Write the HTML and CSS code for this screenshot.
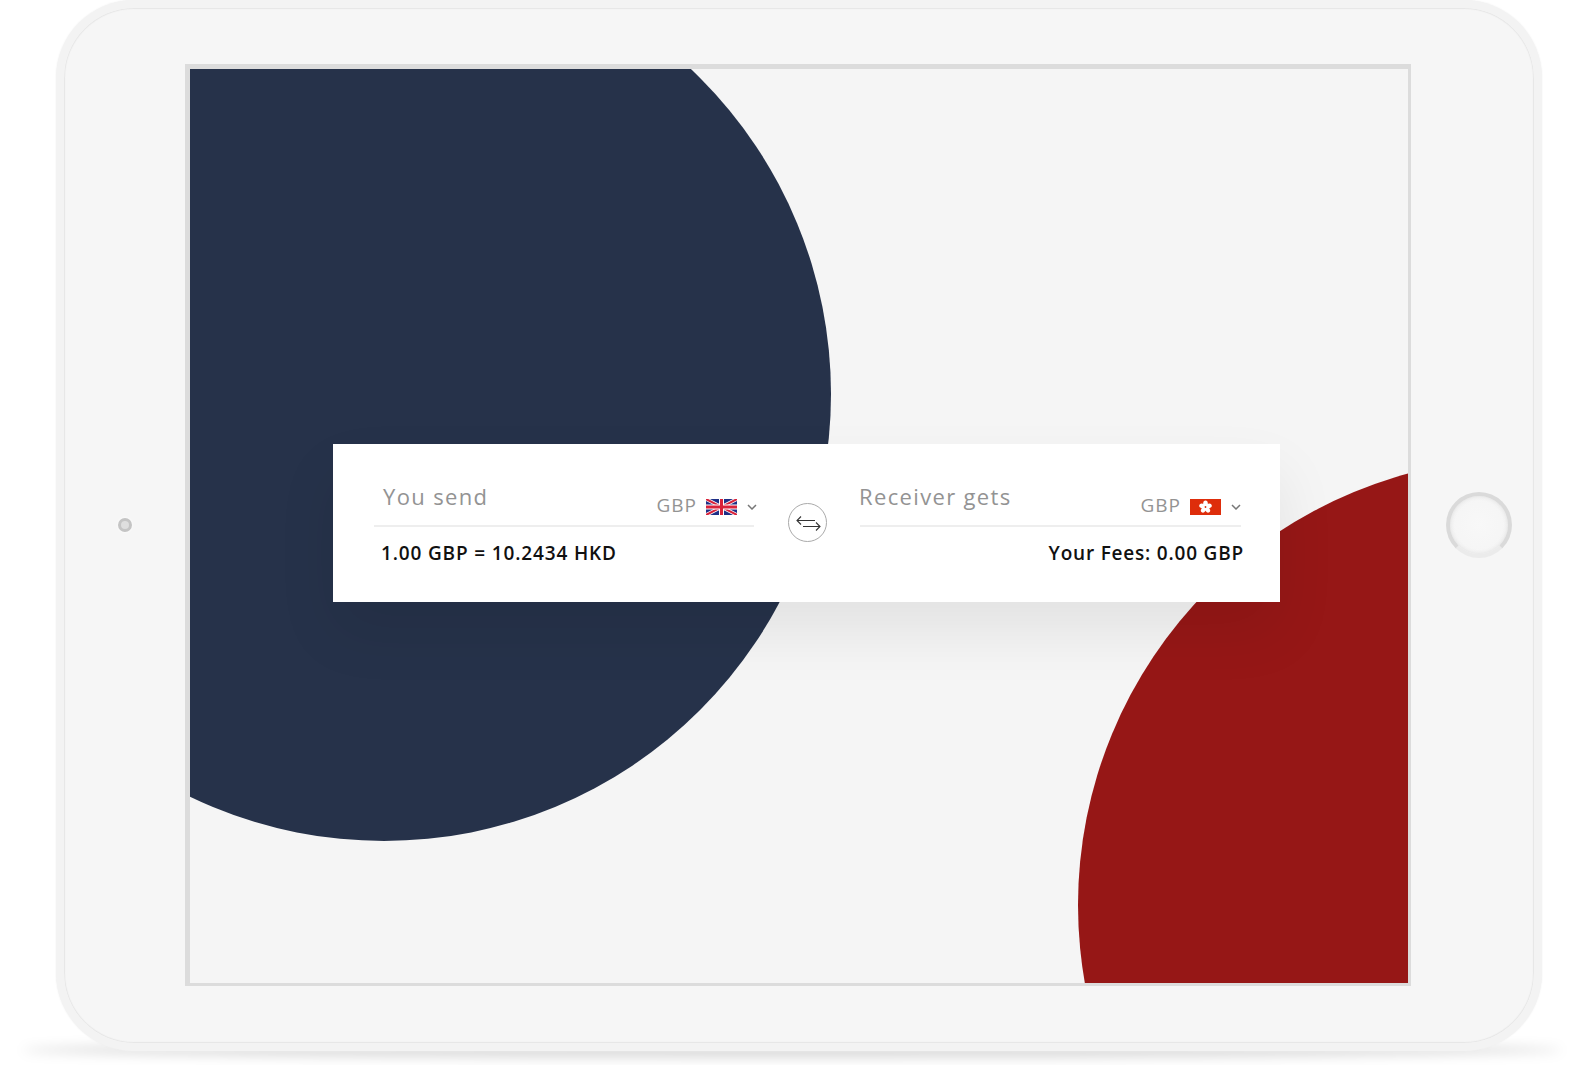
FILE: index.html
```html
<!DOCTYPE html>
<html lang="en">
<head>
  <meta charset="UTF-8">
  <title>Currency Converter</title>
  <link rel="stylesheet" href="styles.css">
</head>
<body>
  <div class="device-shadow"></div>
  <div class="device">
    <div class="camera-col"><div class="camera"></div></div>

    <div class="screen">
      <div class="circle circle-navy"></div>
      <div class="circle circle-red"></div>

      <div class="converter">
        <div class="field">
          <div class="field-top">
            <span class="field-label">You send</span>
            <span class="currency">
              <span class="currency-code">GBP</span>
              <svg class="flag" viewBox="0 0 31 16">
                <rect width="31" height="16" fill="#1f2f86"/>
                <path d="M0 0L31 16M31 0L0 16" stroke="#fff" stroke-width="3.6"/>
                <path d="M0 0L31 16M31 0L0 16" stroke="#d8223a" stroke-width="2"/>
                <path d="M15.5 0V16M0 8H31" stroke="#fff" stroke-width="5"/>
                <path d="M15.5 0V16M0 8H31" stroke="#d8223a" stroke-width="3"/>
              </svg>
              <svg class="chevron" viewBox="0 0 10 6"><path d="M1 1L5 5L9 1"/></svg>
            </span>
          </div>
          <div class="field-note">1.00 GBP = 10.2434 HKD</div>
        </div>

        <div class="swap">
          <svg viewBox="0 0 37 37">
            <path d="M26 16.5H8M12 12.5L8 16.5L12 20.5"/>
            <path d="M14 22.5H31M27 18.5L31 22.5L27 26.5"/>
          </svg>
        </div>

        <div class="field field-right">
          <div class="field-top">
            <span class="field-label">Receiver gets</span>
            <span class="currency">
              <span class="currency-code">GBP</span>
              <svg class="flag" viewBox="0 0 31 16">
                <rect width="31" height="16" fill="#de2d0b"/>
                <g fill="#fff">
                  <ellipse cx="15.5" cy="4.6" rx="2.3" ry="3.1"/>
                  <ellipse cx="15.5" cy="4.6" rx="2.3" ry="3.1" transform="rotate(72 15.5 8)"/>
                  <ellipse cx="15.5" cy="4.6" rx="2.3" ry="3.1" transform="rotate(144 15.5 8)"/>
                  <ellipse cx="15.5" cy="4.6" rx="2.3" ry="3.1" transform="rotate(216 15.5 8)"/>
                  <ellipse cx="15.5" cy="4.6" rx="2.3" ry="3.1" transform="rotate(288 15.5 8)"/>
                </g>
                <circle cx="15.5" cy="8" r="0.9" fill="#de2d0b"/>
              </svg>
              <svg class="chevron" viewBox="0 0 10 6"><path d="M1 1L5 5L9 1"/></svg>
            </span>
          </div>
          <div class="field-note">Your Fees: 0.00 GBP</div>
        </div>
      </div>
    </div>

    <div class="home-col"><div class="home-btn"></div></div>
  </div>
</body>
</html>
```

FILE: styles.css
```css
html, body {
  margin: 0;
  padding: 0;
}

body {
  position: relative;
  width: 1576px;
  height: 1065px;
  overflow: hidden;
  background: #fff;
  font-family: 'Open Sans', sans-serif;
}

.device-shadow {
  position: absolute;
  left: 22px;
  top: 1042px;
  width: 1540px;
  height: 16px;
  border-radius: 50%;
  background: rgba(0, 0, 0, 0.14);
  filter: blur(6px);
}

.device {
  position: relative;
  box-sizing: border-box;
  width: 1486px;
  height: 1051px;
  margin-left: 56px;
  border: 8px solid #f3f3f3;
  border-radius: 78px;
  background: #f6f6f6;
  box-shadow: inset 0 0 1px 1px #e6e6e6, 0 0 2px #eee;
  display: flex;
  padding-top: 56px;
}

.camera-col {
  flex: none;
  width: 121px;
  height: 922px;
  display: flex;
  justify-content: center;
  align-items: center;
}

.camera {
  box-sizing: border-box;
  width: 14px;
  height: 14px;
  border-radius: 50%;
  border: 3px solid #c4c4c4;
  background: #dedede;
  box-shadow: 0 0 3px #fff;
}

.screen {
  position: relative;
  flex: none;
  box-sizing: border-box;
  width: 1226px;
  height: 922px;
  overflow: hidden;
  border: solid #dcdcdc;
  border-width: 5px 3px 3px 5px;
  background: #f5f5f5;
  padding: 375px 0 0 143px;
}

.circle {
  position: absolute;
  width: 894px;
  height: 894px;
  border-radius: 50%;
}

.circle-navy {
  left: -253px;
  top: -122px;
  background: #26324a;
}

.circle-red {
  left: 888px;
  top: 389px;
  background: #961716;
}

.converter {
  position: relative;
  box-sizing: border-box;
  width: 947px;
  height: 158px;
  background: #fff;
  box-shadow: 0 30px 60px rgba(0, 0, 0, 0.08);
  padding: 0 39px 0 41px;
  display: flex;
}

.field {
  width: 380px;
  padding-top: 34px;
}

.field-right {
  width: 381px;
}

.field-top {
  height: 49px;
  box-sizing: border-box;
  border-bottom: 2px solid #eee;
  display: flex;
  justify-content: space-between;
  padding-left: 9px;
}

.field-right .field-top {
  padding-left: 0;
}

.field-label {
  font-size: 22px;
  line-height: 30px;
  letter-spacing: 1.35px;
  color: #939393;
  padding-top: 3px;
}

.field-right .field-label {
  margin-left: -1px;
}

.currency {
  display: flex;
  align-items: center;
  height: 36px;
  margin-top: 9px;
  margin-right: -3px;
  font-size: 19px;
  letter-spacing: 1px;
  color: #939393;
}

.field-right .currency {
  margin-right: 0;
}

.flag {
  width: 31px;
  height: 16px;
  margin-left: 9px;
  margin-top: 3px;
}

.chevron {
  width: 10px;
  height: 6px;
  margin-left: 10px;
  margin-top: 3px;
  fill: none;
  stroke: #777;
  stroke-width: 1.5;
}

.field-note {
  margin-top: 13px;
  padding-left: 7px;
  font-size: 19px;
  line-height: 26px;
  font-weight: 600;
  letter-spacing: 0.85px;
  color: #111;
}

.field-right .field-note {
  text-align: right;
  margin-right: -3px;
  letter-spacing: 0.8px;
}

.swap {
  box-sizing: border-box;
  width: 39px;
  height: 39px;
  margin: 59px 33px 0 34px;
  border: 1px solid #aaa;
  border-radius: 50%;
}

.swap svg {
  display: block;
  width: 37px;
  height: 37px;
  fill: none;
  stroke: #333;
  stroke-width: 1.1;
}

.home-col {
  flex: none;
  box-sizing: border-box;
  width: 122px;
  height: 922px;
  display: flex;
  align-items: center;
  padding-left: 35px;
}

.home-btn {
  box-sizing: border-box;
  flex: none;
  width: 66px;
  height: 66px;
  border-radius: 50%;
  border: 4px solid #dadada;
  border-bottom-color: #ebebeb;
  background: radial-gradient(circle, #f8f8f8, #f4f4f4);
  box-shadow: inset 0 0 4px #ddd;
}
```
